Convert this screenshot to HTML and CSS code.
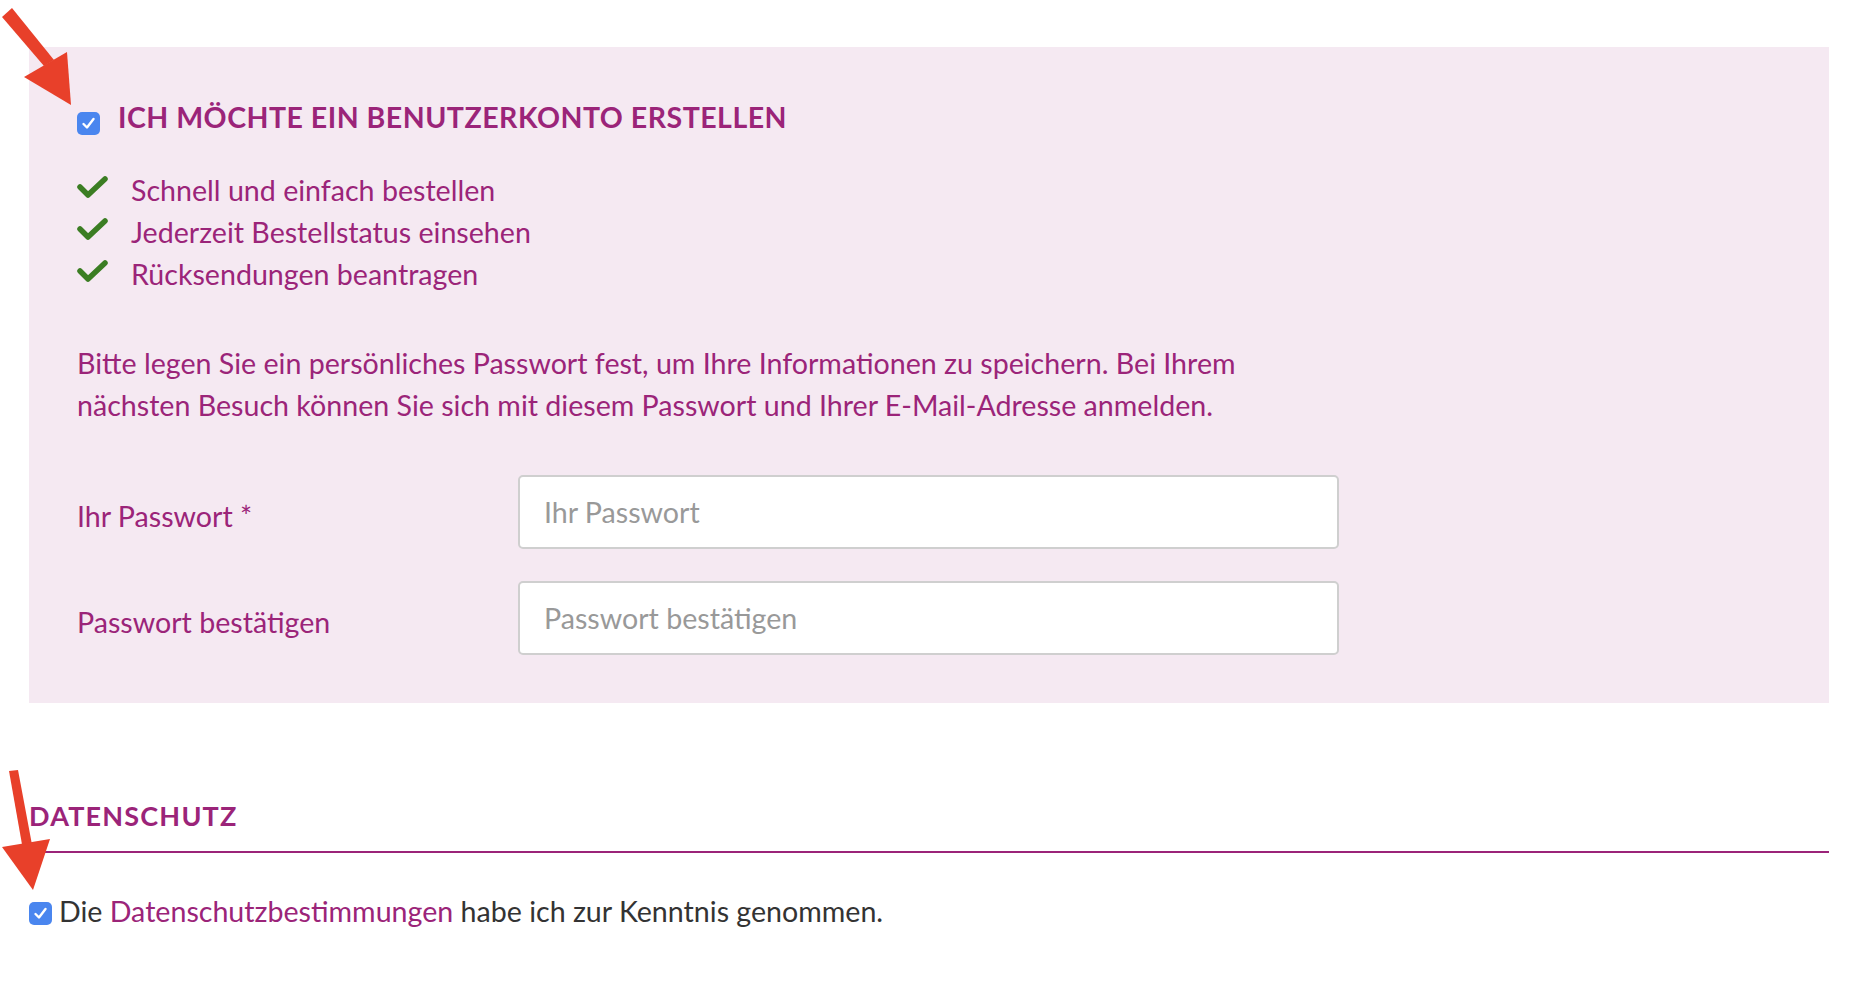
FILE: index.html
```html
<!DOCTYPE html>
<html lang="de">
<head>
<meta charset="utf-8">
<title>Benutzerkonto</title>
<link rel="stylesheet" href="styles.css">
</head>
<body>
<div class="page">
  <section class="account">
    <div class="account-head">
      <span class="cb"><svg viewBox="0 0 23 23" width="23" height="23"><polyline points="6.5,12 10,15.5 16.5,7" fill="none" stroke="#fff" stroke-width="2.4" stroke-linecap="round" stroke-linejoin="round"/></svg></span>
      <h2 class="account-title">ICH MÖCHTE EIN BENUTZERKONTO ERSTELLEN</h2>
    </div>
    <ul class="benefits">
      <li><svg class="tick" viewBox="0 0 32 24" width="32" height="24"><polyline points="3,11 11,19 28,3" fill="none" stroke="#3b7d23" stroke-width="5.5" stroke-linecap="round" stroke-linejoin="round"/></svg><span>Schnell und einfach bestellen</span></li>
      <li><svg class="tick" viewBox="0 0 32 24" width="32" height="24"><polyline points="3,11 11,19 28,3" fill="none" stroke="#3b7d23" stroke-width="5.5" stroke-linecap="round" stroke-linejoin="round"/></svg><span>Jederzeit Bestellstatus einsehen</span></li>
      <li><svg class="tick" viewBox="0 0 32 24" width="32" height="24"><polyline points="3,11 11,19 28,3" fill="none" stroke="#3b7d23" stroke-width="5.5" stroke-linecap="round" stroke-linejoin="round"/></svg><span>Rücksendungen beantragen</span></li>
    </ul>
    <p class="intro">Bitte legen Sie ein persönliches Passwort fest, um Ihre Informationen zu speichern. Bei Ihrem nächsten Besuch können Sie sich mit diesem Passwort und Ihrer E-Mail-Adresse anmelden.</p>
    <div class="form-row">
      <label class="form-label" for="pw1">Ihr Passwort *</label>
      <input class="form-input" id="pw1" type="password" placeholder="Ihr Passwort">
    </div>
    <div class="form-row">
      <label class="form-label" for="pw2">Passwort bestätigen</label>
      <input class="form-input" id="pw2" type="password" placeholder="Passwort bestätigen">
    </div>
  </section>

  <section class="privacy">
    <h3 class="privacy-title">DATENSCHUTZ</h3>
    <div class="consent">
      <span class="cb"><svg viewBox="0 0 23 23" width="23" height="23"><polyline points="6.5,12 10,15.5 16.5,7" fill="none" stroke="#fff" stroke-width="2.4" stroke-linecap="round" stroke-linejoin="round"/></svg></span>
      <span class="consent-text">Die <a href="#" class="link">Datenschutzbestimmungen</a> habe ich zur Kenntnis genommen.</span>
    </div>
  </section>

  <svg class="arrows" width="1860" height="982" viewBox="0 0 1860 982">
    <g fill="#e8402a">
      <polygon points="2,17 12,8 54,60 44,66"/>
      <polygon points="24,77 67,52 71,105"/>
      <polygon points="9,771 18,770 33,850 23,850"/>
      <polygon points="2,847 50,839 33,890"/>
    </g>
  </svg>
</div>
</body>
</html>
```

FILE: styles.css
```css
* { box-sizing: border-box; }
html, body { margin: 0; padding: 0; background: #fff; }
body {
  font-family: "Lato", "Open Sans", sans-serif;
  font-size: 28.6px;
  line-height: 42px;
  color: #333;
}
.page {
  position: relative;
  width: 1860px;
  height: 982px;
  overflow: hidden;
  padding: 47px 31px 0 29px;
}
.account {
  background: #f5e9f2;
  padding: 49px 48px 48px;
  color: #9b2479;
}
.account-head {
  display: flex;
  align-items: center;
  gap: 18px;
  height: 42px;
}
.cb {
  flex: none;
  width: 23px;
  height: 23px;
  border-radius: 5px;
  background: #4a86ef;
  display: inline-flex;
  position: relative;
  top: 6px;
}
.account-title {
  margin: 0;
  font-size: 28.5px;
  font-weight: 700;
  letter-spacing: 0.5px;
  line-height: 42px;
  color: #9b2479;
}
.benefits {
  list-style: none;
  margin: 31px 0 0;
  padding: 0;
}
.benefits li {
  display: flex;
  align-items: center;
  gap: 22px;
  height: 42px;
}
.tick { flex: none; position: relative; top: -2px; }
.intro {
  margin: 47px 0 0;
  max-width: 1262px;
}
.form-row {
  display: grid;
  grid-template-columns: 441px 821px;
  align-items: center;
  margin-top: 49px;
}
.form-row + .form-row { margin-top: 32px; }
.form-label {
  color: #9b2479;
  position: relative;
  top: 4px;
}
.form-input {
  height: 74px;
  border: 2px solid #cfcfcf;
  border-radius: 5px;
  background: #fff;
  padding: 0 24px;
  font: inherit;
  color: #333;
  outline: none;
}
.form-input::placeholder { color: #999; }
.privacy { margin-top: 95px; }
.privacy-title {
  margin: 0;
  font-size: 27px;
  font-weight: 700;
  letter-spacing: 1.2px;
  line-height: 36px;
  color: #9b2479;
  padding-bottom: 17px;
  border-bottom: 2px solid #9b2479;
}
.consent {
  margin-top: 37px;
  display: flex;
  align-items: center;
  gap: 7px;
  height: 42px;
}
.consent .cb { top: 2px; }
.link { color: #9b2479; text-decoration: none; }
.arrows {
  position: absolute;
  left: 0;
  top: 0;
  pointer-events: none;
}
```
